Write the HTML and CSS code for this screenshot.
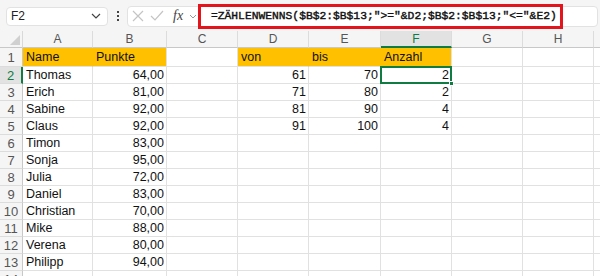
FILE: index.html
```html
<!DOCTYPE html>
<html lang="de">
<head>
    <meta charset="UTF-8">
    <meta name="viewport" content="width=device-width, initial-scale=1.0">
    <title>ZÄHLENWENNS</title>
    <link rel="stylesheet" href="styles.css">
</head>
<body>
    <div class="leiste">
        <div class="namenfeld">
            <span>F2</span>
            <svg width="10" height="6" viewBox="0 0 10 6"><path d="M1 1 L5 5 L9 1" fill="none" stroke="#444" stroke-width="1.2"/></svg>
        </div>
        <div class="punkte">
            <i></i><i></i><i></i>
        </div>
        <div class="formelfeld">
            <div class="knoepfe">
                <svg width="12" height="12" viewBox="0 0 12 12"><path d="M1 1 L11 11 M11 1 L1 11" stroke="#c4c4c4" stroke-width="1.2"/></svg>
                <svg width="14" height="12" viewBox="0 0 14 12"><path d="M1 6 L5 10 L13 1" fill="none" stroke="#c4c4c4" stroke-width="1.2"/></svg>
                <span class="fx">fx</span>
                <svg width="8" height="5" viewBox="0 0 8 5"><path d="M1 1 L4 4 L7 1" fill="none" stroke="#999" stroke-width="1"/></svg>
            </div>
            <div class="formel">=ZÄHLENWENNS($B$2:$B$13;"&gt;="&amp;D2;$B$2:$B$13;"&lt;="&amp;E2)</div>
        </div>
    </div>

    <div class="tabelle" id="tabelle"></div>

    <script>
        const spalten = ["A", "B", "C", "D", "E", "F", "G", "H", ""];
        const daten = {
            1: { A: "Name", B: "Punkte", D: "von", E: "bis", F: "Anzahl" },
            2: { A: "Thomas", B: "64,00", D: "61", E: "70", F: "2" },
            3: { A: "Erich", B: "81,00", D: "71", E: "80", F: "2" },
            4: { A: "Sabine", B: "92,00", D: "81", E: "90", F: "4" },
            5: { A: "Claus", B: "92,00", D: "91", E: "100", F: "4" },
            6: { A: "Timon", B: "83,00" },
            7: { A: "Sonja", B: "95,00" },
            8: { A: "Julia", B: "72,00" },
            9: { A: "Daniel", B: "83,00" },
            10: { A: "Christian", B: "70,00" },
            11: { A: "Mike", B: "88,00" },
            12: { A: "Verena", B: "80,00" },
            13: { A: "Philipp", B: "94,00" },
            14: {}
        };
        const orange = ["A", "B", "D", "E", "F"];

        const tabelle = document.getElementById("tabelle");

        const ecke = document.createElement("div");
        ecke.className = "ecke";
        ecke.innerHTML = '<svg width="10" height="10" viewBox="0 0 10 10"><path d="M10 0 L10 10 L0 10 Z" fill="#d0d0d0"/></svg>';
        tabelle.appendChild(ecke);

        spalten.forEach(s => {
            const div = document.createElement("div");
            div.className = "kopf" + (s === "F" ? " aktiv" : "");
            div.textContent = s;
            tabelle.appendChild(div);
        });

        Object.keys(daten).forEach(nr => {
            const zeile = Number(nr);
            const nummer = document.createElement("div");
            nummer.className = "nummer" + (zeile === 2 ? " aktiv" : "");
            nummer.textContent = zeile;
            tabelle.appendChild(nummer);

            spalten.forEach(s => {
                const div = document.createElement("div");
                const wert = daten[zeile][s] || "";
                div.className = "zelle";
                if (zeile === 1 && orange.includes(s)) {
                    div.classList.add("orange");
                    if (s === "A" || s === "D" || s === "E") div.classList.add("innen");
                }
                if (zeile > 1 && wert !== "" && s !== "A") div.classList.add("zahl");
                if (zeile === 2 && s === "F") div.classList.add("auswahl");
                div.textContent = wert;
                tabelle.appendChild(div);
            });
        });
    </script>
</body>
</html>
```

FILE: styles.css
```css
body {
    margin: 0;
    padding: 0;
    width: 600px;
    height: 276px;
    overflow: hidden;
    background: #ffffff;
    font-family: "Liberation Sans", Arial, sans-serif;
    color: #222;
}
.leiste {
    display: flex;
    align-items: center;
    height: 31px;
    background: #f5f5f5;
    box-sizing: border-box;
    padding: 1px 0 0 6px;
}
.namenfeld {
    display: flex;
    align-items: center;
    justify-content: space-between;
    flex-shrink: 0;
    width: 102px;
    height: 19px;
    box-sizing: border-box;
    background: white;
    border: 1px solid #e2e2e2;
    border-radius: 4px;
    padding: 0 6px 0 4px;
    font-size: 12px;
    color: #222;
}
.punkte {
    display: flex;
    flex-direction: column;
    flex-shrink: 0;
    gap: 2px;
    width: 19px;
    align-items: center;
}
.punkte i {
    display: block;
    width: 2px;
    height: 2px;
    background: #444;
}
.formelfeld {
    display: flex;
    align-items: center;
    flex: 1;
    min-width: 0;
    height: 19px;
    margin-right: 2px;
    background: white;
    border: 1px solid #e2e2e2;
    border-radius: 4px;
}
.knoepfe {
    display: flex;
    align-items: center;
    flex-shrink: 0;
    gap: 6px;
    width: 70px;
    padding-left: 4px;
    box-sizing: border-box;
}
.fx {
    font-family: "Liberation Serif", serif;
    font-style: italic;
    font-size: 14px;
    color: #444;
    margin-left: 3px;
}
.formel {
    flex: 1;
    min-width: 0;
    height: 25px;
    box-sizing: border-box;
    margin-right: 34px;
    border: 3px solid #e3141b;
    padding-left: 10px;
    font-family: "Liberation Mono", monospace;
    font-size: 11.3px;
    line-height: 19px;
    color: #111;
    -webkit-text-stroke: 0.4px #111;
    white-space: nowrap;
    background: white;
}
.tabelle {
    display: grid;
    grid-template-columns: 23px 70px 74px 71px 71px 72px 71px 71px 71px 1fr;
    grid-template-rows: 17px 19px repeat(13, 17px);
    font-size: 12px;
}
.ecke {
    background: #f5f5f5;
    border-right: 1px solid #d9d9d9;
    border-bottom: 1px solid #c8c8c8;
    display: flex;
    align-items: flex-end;
    justify-content: flex-end;
    padding: 0 2px 2px 0;
}
.kopf {
    background: #f5f5f5;
    border-right: 1px solid #dcdcdc;
    border-bottom: 1px solid #c8c8c8;
    color: #555;
    text-align: center;
    line-height: 16px;
}
.kopf.aktiv {
    background: #e2e2e2;
    color: #107c41;
    border-bottom: 2px solid #107c41;
}
.nummer {
    background: #f5f5f5;
    border-right: 1px solid #c8c8c8;
    border-bottom: 1px solid #dcdcdc;
    color: #555;
    display: flex;
    align-items: center;
    justify-content: center;
    font-size: 13px;
}
.nummer.aktiv {
    background: #e2e2e2;
    color: #107c41;
    border-right: 2px solid #107c41;
}
.zelle {
    border-right: 1px solid #e1e1e1;
    border-bottom: 1px solid #e1e1e1;
    padding: 0 3px;
    display: flex;
    align-items: center;
    white-space: nowrap;
    font-size: 12.5px;
    color: #111;
    position: relative;
}
.orange {
    background: #ffc000;
}
.innen {
    border-right-color: #ffc000;
}
.zahl {
    justify-content: flex-end;
    padding-right: 2px;
}
.auswahl::after {
    content: "";
    position: absolute;
    left: -1px;
    top: -1px;
    right: -1px;
    bottom: -1px;
    border: 2px solid #107c41;
}
.auswahl::before {
    content: "";
    position: absolute;
    right: -3px;
    bottom: -3px;
    width: 5px;
    height: 5px;
    background: #107c41;
    border: 1px solid white;
    box-sizing: border-box;
    z-index: 1;
}
```
